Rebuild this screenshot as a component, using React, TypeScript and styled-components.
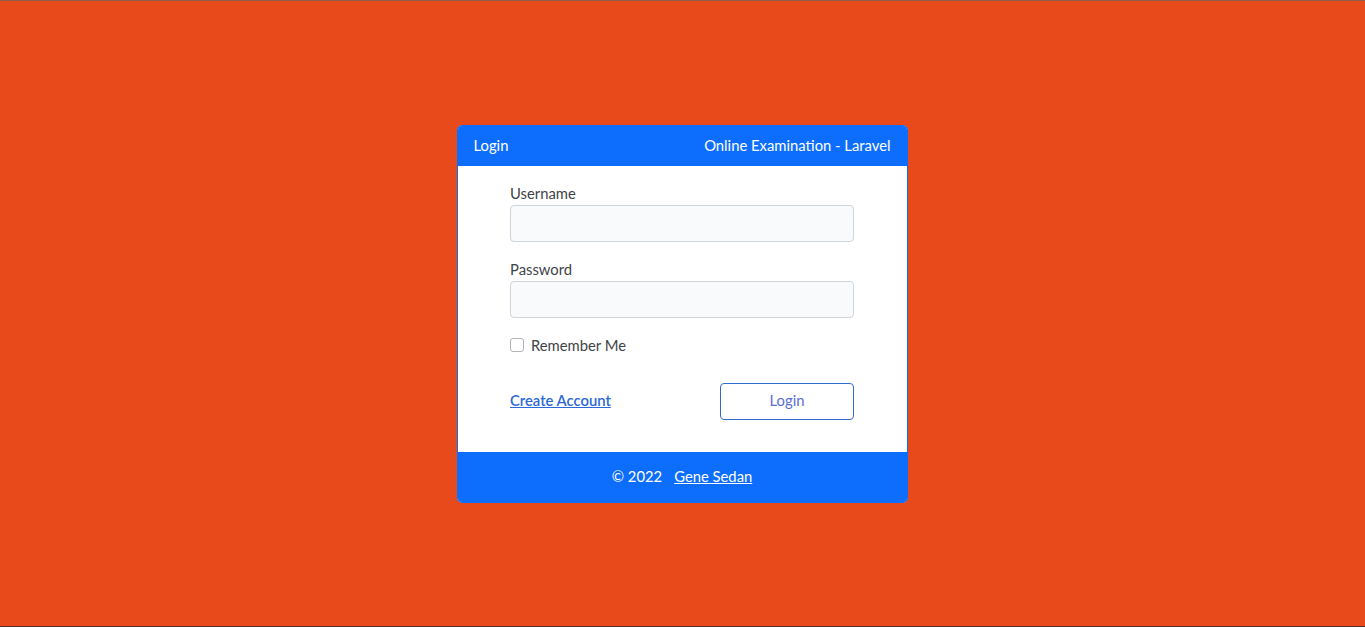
import React from "react";
import styled, { createGlobalStyle } from "styled-components";

const GlobalStyle = createGlobalStyle`
  html, body {
    margin: 0;
    padding: 0;
    height: 100%;
  }
  body {
    background: #e84a1b;
    font-family: Lato, "Noto Sans", sans-serif;
    font-size: 14.8px;
    line-height: 1.6;
    color: #3e4348;
    border-top: 1px solid #8a5e48;
    border-bottom: 1px solid #5a3020;
    box-sizing: border-box;
  }
  *, *::before, *::after { box-sizing: border-box; }
`;

const Page = styled.main`
  height: 625px;
  display: flex;
  align-items: center;
  justify-content: center;
  padding-right: 1px;
`;

const Card = styled.section`
  width: 451px;
  display: flex;
  flex-direction: column;
  border: 1px solid #0d6efd;
  border-radius: 5px;
  overflow: hidden;
  background: #ffffff;
`;

const Bar = styled.header<{ $center?: boolean }>`
  background: #0d6efd;
  color: #ffffff;
  display: flex;
  align-items: center;
  justify-content: ${(p) => (p.$center ? "center" : "space-between")};
  padding: 0 16px;
  height: ${(p) => (p.$center ? "50px" : "40px")};
  gap: 12px;
`;

const FooterLink = styled.a`
  color: #ffffff;
  text-decoration: underline;
`;

const Body = styled.form`
  padding: 16px 0 32px;
  display: flex;
  flex-direction: column;
  align-items: center;
`;

const Fields = styled.div`
  width: 344px;
  display: flex;
  flex-direction: column;
`;

const Label = styled.label`
  display: block;
  line-height: 23px;
`;

const Input = styled.input`
  display: block;
  width: 100%;
  height: 37px;
  margin-bottom: 16px;
  border: 1px solid #ced4da;
  border-radius: 4px;
  background: #f8fafc;
  padding: 6px 12px;
  font: inherit;
`;

const CheckRow = styled.label`
  display: flex;
  align-items: center;
  gap: 7px;
  line-height: 23px;
  margin-bottom: 26px;
`;

const Check = styled.span`
  width: 14px;
  height: 14px;
  border: 1px solid #adb3b9;
  border-radius: 3px;
  background: #fff;
`;

const Actions = styled.div`
  display: flex;
  align-items: center;
  justify-content: space-between;
`;

const LinkText = styled.a`
  color: #2d68d8;
  text-decoration: underline;
  font-weight: 600;
`;

const Button = styled.button`
  width: 134px;
  height: 37px;
  border: 1px solid #2f6ccd;
  border-radius: 4px;
  background: #fff;
  color: #5a6dd4;
  font: inherit;
`;

export default function App() {
  return (
    <>
      <GlobalStyle />
      <Page>
        <Card>
          <Bar>
            <span>Login</span>
            <span>Online Examination - Laravel</span>
          </Bar>
          <Body>
            <Fields>
              <Label>Username</Label>
              <Input type="text" />
              <Label>Password</Label>
              <Input type="password" />
              <CheckRow>
                <Check />
                Remember Me
              </CheckRow>
              <Actions>
                <LinkText href="#">Create Account</LinkText>
                <Button type="button">Login</Button>
              </Actions>
            </Fields>
          </Body>
          <Bar as="footer" $center>
            <span>© 2022</span>
            <FooterLink href="#">Gene Sedan</FooterLink>
          </Bar>
        </Card>
      </Page>
    </>
  );
}
